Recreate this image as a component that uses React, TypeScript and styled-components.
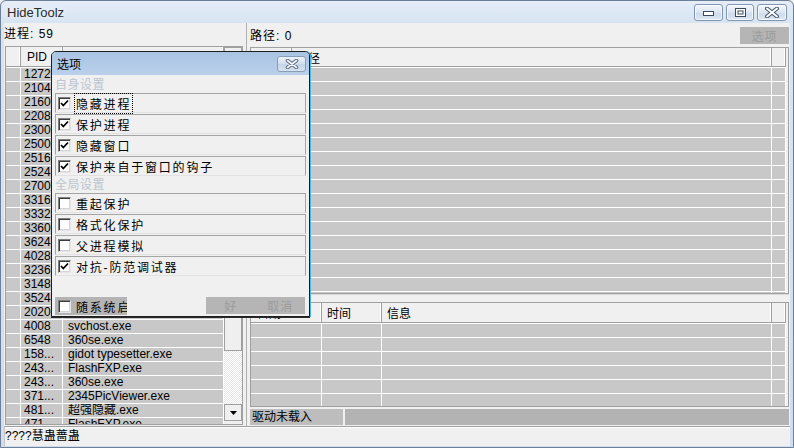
import React from 'react';
import styled, { createGlobalStyle } from 'styled-components';

const FONT = `"Liberation Sans", "Noto Sans CJK SC", sans-serif`;

const GlobalStyle = createGlobalStyle`
  html, body { margin: 0; padding: 0; background: #f0f0f0; }
  body { font-family: ${FONT}; font-size: 12px; color: #000; }
  * { box-sizing: border-box; }
`;

const Root = styled.div`
  position: relative;
  width: 794px;
  height: 448px;
  overflow: hidden;
`;

const Frame = styled.div`
  display: flex;
  flex-direction: column;
  width: 100%;
  height: 100%;
  border: 1px solid #6d7f96;
  border-radius: 6px 6px 0 0;
  background: linear-gradient(#e4edf8, #d6e3f2 24px, #cfdef0);
  padding: 0 3px 1px 3px;
`;

const TitleBar = styled.div`
  height: 22px;
  flex: 0 0 22px;
  display: flex;
  align-items: flex-start;
  justify-content: space-between;
`;

const TitleText = styled.div`
  padding: 4px 0 0 3px;
  font-family: "Liberation Sans", sans-serif;
  font-size: 13px;
  color: #2a2a2a;
  text-shadow: 0 0 6px #fff;
`;

const WinControls = styled.div`
  display: flex;
  gap: 3px;
  padding-top: 3px;
  margin-right: 3px;
`;

const WinButton = styled.div<{ $w: number }>`
  width: ${(p) => p.$w}px;
  height: 17px;
  border: 1px solid #8295b0;
  border-radius: 3px;
  background: linear-gradient(#f4f7fb, #dbe5f1 50%, #cdd9e9 51%, #dde7f3);
  box-shadow: inset 0 0 0 1px rgba(255, 255, 255, 0.7);
  display: flex;
  align-items: center;
  justify-content: center;
`;

const Client = styled.div`
  flex: 1;
  display: flex;
  flex-direction: column;
  background: #f0f0f0;
  min-height: 0;
`;

const Main = styled.div`
  flex: 1;
  display: flex;
  min-height: 0;
`;

const LeftPane = styled.div`
  width: 242px;
  flex: 0 0 242px;
  display: flex;
  flex-direction: column;
  padding: 0 3px 1px 1px;
`;

const Splitter = styled.div`
  width: 3px;
  flex: 0 0 3px;
  border-left: 1px solid #b0b0b0;
`;

const PaneLabel = styled.div`
  height: 23px;
  flex: 0 0 23px;
  line-height: 22px;
  font-size: 12px;
  letter-spacing: 1px;
  margin-left: -1px;
  white-space: nowrap;
`;

const PathLabel = styled.span`
  font-size: 12px;
  letter-spacing: 1px;
  white-space: nowrap;
  margin-bottom: 2px;
`;

const ListBox = styled.div<{ $h?: number }>`
  ${(p) => (p.$h ? `height: ${p.$h}px; flex: 0 0 ${p.$h}px;` : 'flex: 1; min-height: 0;')}
  border: 1px solid #a0a0a0;
  background: #f0f0f0;
  display: flex;
  overflow: hidden;
`;

const TableArea = styled.div<{ $pr?: number }>`
  flex: 1;
  min-width: 0;
  display: flex;
  flex-direction: column;
  overflow: hidden;
  padding-right: ${(p) => p.$pr ?? 0}px;
`;

const HeaderRow = styled.div<{ $h: number }>`
  height: ${(p) => p.$h}px;
  flex: 0 0 ${(p) => p.$h}px;
  display: flex;
  border-bottom: 1px solid #a0a0a0;
  box-shadow: 0 1px 0 #fff;
  margin-bottom: 1px;
`;

const HeaderCell = styled.div<{ $w?: number; $pl?: number }>`
  ${(p) => (p.$w ? `flex: 0 0 ${p.$w}px;` : 'flex: 1 1 0;')}
  min-width: 0;
  border-right: 1px solid #a0a0a0;
  box-shadow: inset -1px 0 0 #fff;
  padding-left: ${(p) => p.$pl ?? 4}px;
  display: flex;
  align-items: center;
  font-size: 12px;
  white-space: nowrap;
  overflow: hidden;
`;

const Row = styled.div`
  display: flex;
  height: 14px;
  flex: 0 0 14px;
`;

const Cell = styled.div<{ $w?: number; $pl?: number }>`
  ${(p) => (p.$w ? `flex: 0 0 ${p.$w}px;` : 'flex: 1 1 0;')}
  min-width: 0;
  background: #c8c8c8;
  border-right: 1px solid #fff;
  border-bottom: 1px solid #fff;
  padding-left: ${(p) => p.$pl ?? 3}px;
  font-size: 12px;
  line-height: 13px;
  white-space: nowrap;
  overflow: hidden;
`;

const ScrollCol = styled.div`
  width: 18px;
  flex: 0 0 18px;
  display: flex;
  flex-direction: column;
  padding-bottom: 3px;
`;

const ScrollBtn = styled.div`
  height: 17px;
  flex: 0 0 17px;
  border: 1px solid #a0a0a0;
  background: #f0f0f0;
  display: flex;
  align-items: center;
  justify-content: center;
`;

const ScrollThumb = styled.div`
  height: 287px;
  flex: 0 0 287px;
  border: 1px solid #a0a0a0;
  background: #efefef;
`;

const ScrollTrack = styled.div`
  flex: 1;
  background: repeating-conic-gradient(#ffffff 0 25%, #e6e6e6 0 50%) 0 0 / 2px 2px;
`;

const RightPane = styled.div`
  flex: 1;
  min-width: 0;
  display: flex;
  flex-direction: column;
  padding: 0 1px 1px 1px;
`;

const TopBar = styled.div`
  height: 24px;
  flex: 0 0 24px;
  display: flex;
  align-items: center;
  justify-content: space-between;
`;

const GreyButton = styled.div<{ $w?: number }>`
  ${(p) => (p.$w ? `width: ${p.$w}px; flex: 0 0 ${p.$w}px;` : 'flex: 1 1 0;')}
  height: 17px;
  background: #b5b5b5;
  color: #9c9c9c;
  font-size: 12px;
  letter-spacing: 1px;
  display: flex;
  align-items: center;
  justify-content: center;
`;

const Gap = styled.div<{ $h: number }>`
  height: ${(p) => p.$h}px;
  flex: 0 0 ${(p) => p.$h}px;
  border-top: ${(p) => (p.$h > 4 ? '1px solid #d8d8d8' : 'none')};
`;

const StatusRow = styled.div`
  height: 16px;
  flex: 0 0 16px;
  display: flex;
  gap: 2px;
`;

const StatusBox = styled.div<{ $w?: number; $bg: string }>`
  ${(p) => (p.$w ? `flex: 0 0 ${p.$w}px;` : 'flex: 1 1 0;')}
  background: ${(p) => p.$bg};
  font-size: 12px;
  line-height: 16px;
  padding-left: 2px;
  white-space: nowrap;
  overflow: hidden;
`;

const BottomStrip = styled.div`
  height: 20px;
  flex: 0 0 20px;
  border-top: 1px solid #a0a0a0;
  border-left: 1px solid #c8c8c8;
  box-shadow: inset 0 1px 0 #fff;
  font-size: 12px;
  line-height: 18px;
  white-space: nowrap;
`;

/* Dialog */

const Dialog = styled.div`
  position: absolute;
  left: 51px;
  top: 51px;
  width: 259px;
  height: 266px;
  border: 1px solid #1e1e1e;
  border-radius: 5px 5px 0 0;
  background: #f0f0f0;
  box-shadow: 1px 0 0 #44b9e8, 0 1px 0 #2a2a2a;
  display: flex;
  flex-direction: column;
  overflow: hidden;
`;

const DialogTitle = styled.div`
  height: 23px;
  flex: 0 0 23px;
  background: linear-gradient(#a9c4e3, #bad0ea);
  display: flex;
  align-items: center;
  justify-content: space-between;
  padding: 0 3px 0 5px;
  font-size: 12px;
`;

const DialogClose = styled.div`
  width: 29px;
  height: 16px;
  border: 1px solid #8a9db7;
  border-radius: 3px;
  background: linear-gradient(#eef3fa, #d2deed 50%, #c4d4e8 51%, #d6e2f0);
  display: flex;
  align-items: center;
  justify-content: center;
`;

const DialogBody = styled.div`
  flex: 1;
  display: flex;
  flex-direction: column;
  padding: 1px 3px 1px 3px;
`;

const GroupLabel = styled.div<{ $h: number }>`
  height: ${(p) => p.$h}px;
  flex: 0 0 ${(p) => p.$h}px;
  color: #bcc5cf;
  font-size: 12px;
  line-height: ${(p) => p.$h + 1}px;
  letter-spacing: 0.5px;
`;

const OptionRow = styled.div`
  height: 20px;
  flex: 0 0 20px;
  margin-bottom: 1px;
  border: 1px solid #a5a5a5;
  border-bottom-color: #e2e2e2;
  display: flex;
  align-items: center;
  gap: 5px;
  padding-left: 2px;
`;

const CheckBox = styled.div`
  width: 13px;
  height: 13px;
  flex: 0 0 13px;
  background: #fff;
  border: 1px solid;
  border-color: #808080 #e6e6e6 #e6e6e6 #808080;
  box-shadow: inset 1px 1px 0 #3c3c3c, inset -1px -1px 0 #d4d4d4;
  display: flex;
  align-items: center;
  justify-content: center;
`;

const OptionText = styled.span<{ $focus?: boolean }>`
  font-size: 12px;
  letter-spacing: 1.8px;
  white-space: nowrap;
  ${(p) => (p.$focus ? 'outline: 1px dotted #000; outline-offset: 1px;' : '')}
`;

const Spacer = styled.div`
  flex: 1;
`;

const DialogFooter = styled.div`
  height: 18px;
  flex: 0 0 18px;
  display: flex;
  justify-content: space-between;
  padding-right: 1px;
`;

const AutoStartBox = styled.div`
  width: 72px;
  flex: 0 0 72px;
  background: #b4b4b4;
  display: flex;
  align-items: center;
  gap: 5px;
  padding-left: 3px;
  overflow: hidden;
  white-space: nowrap;
`;

const FooterButtons = styled.div`
  width: 99px;
  display: flex;
`;

const Check = () => (
  <svg width="9" height="9" viewBox="0 0 9 9">
    <polyline points="1,4 3.3,6.5 8,1.5" fill="none" stroke="#000" strokeWidth="1.8" />
  </svg>
);

const Option = ({ label, checked, focus }: { label: string; checked?: boolean; focus?: boolean }) => (
  <OptionRow>
    <CheckBox>{checked && <Check />}</CheckBox>
    <OptionText $focus={focus}>{label}</OptionText>
  </OptionRow>
);

/* names of the first rows are hidden behind the dialog */
const leftRows: [string, string][] = [
  ['1272', ''],
  ['2104', ''],
  ['2160', ''],
  ['2208', ''],
  ['2300', ''],
  ['2500', ''],
  ['2516', ''],
  ['2524', ''],
  ['2700', ''],
  ['3316', ''],
  ['3332', ''],
  ['3360', ''],
  ['3624', ''],
  ['4028', ''],
  ['3236', ''],
  ['3148', ''],
  ['3524', ''],
  ['2020', ''],
  ['4008', 'svchost.exe'],
  ['6548', '360se.exe'],
  ['158...', 'gidot typesetter.exe'],
  ['243...', 'FlashFXP.exe'],
  ['243...', '360se.exe'],
  ['371...', '2345PicViewer.exe'],
  ['481...', '超强隐藏.exe'],
  ['471...', 'FlashFXP.exe'],
];

export default function App() {
  return (
    <Root>
      <GlobalStyle />
      <Frame>
        <TitleBar>
          <TitleText>HideToolz</TitleText>
          <WinControls>
            <WinButton $w={29}>
              <svg width="11" height="6" viewBox="0 0 11 6">
                <rect x="0.5" y="1.5" width="10" height="4" fill="#fff" stroke="#3b4a5e" />
              </svg>
            </WinButton>
            <WinButton $w={28}>
              <svg width="11" height="9" viewBox="0 0 11 9">
                <rect x="0.5" y="0.5" width="10" height="8" fill="#fff" stroke="#3b4a5e" />
                <rect x="3" y="3" width="5" height="3" fill="none" stroke="#3b4a5e" />
              </svg>
            </WinButton>
            <WinButton $w={30}>
              <svg width="14" height="11" viewBox="0 0 14 11">
                <path d="M2 1.5 L12 9.5 M12 1.5 L2 9.5" stroke="#48576b" strokeWidth="4" strokeLinecap="round" />
                <path d="M2 1.5 L12 9.5 M12 1.5 L2 9.5" stroke="#fff" strokeWidth="2" strokeLinecap="round" />
              </svg>
            </WinButton>
          </WinControls>
        </TitleBar>
        <Client>
          <Main>
            <LeftPane>
              <PaneLabel>进程: 59</PaneLabel>
              <ListBox>
                <TableArea>
                  <HeaderRow $h={20}>
                    <HeaderCell $w={15} />
                    <HeaderCell $w={42} $pl={6}>PID</HeaderCell>
                    <HeaderCell $pl={4} />
                  </HeaderRow>
                  {leftRows.map(([pid, name], i) => (
                    <Row key={i}>
                      <Cell $w={15} />
                      <Cell $w={42} $pl={3}>{pid}</Cell>
                      <Cell $pl={5}>{name}</Cell>
                    </Row>
                  ))}
                </TableArea>
                <ScrollCol>
                  <ScrollBtn>
                    <svg width="7" height="4" viewBox="0 0 7 4">
                      <polygon points="0,4 7,4 3.5,0" fill="#000" />
                    </svg>
                  </ScrollBtn>
                  <ScrollThumb />
                  <ScrollTrack />
                  <ScrollBtn>
                    <svg width="7" height="4" viewBox="0 0 7 4">
                      <polygon points="0,0 7,0 3.5,4" fill="#000" />
                    </svg>
                  </ScrollBtn>
                </ScrollCol>
              </ListBox>
            </LeftPane>
            <Splitter />
            <RightPane>
              <TopBar>
                <PathLabel>路径: 0</PathLabel>
                <GreyButton $w={49}>选项</GreyButton>
              </TopBar>
              <ListBox>
                <TableArea $pr={2}>
                  <HeaderRow $h={19}>
                    <HeaderCell $w={41} />
                    <HeaderCell $pl={4}>路径</HeaderCell>
                    <HeaderCell $w={14} />
                  </HeaderRow>
                  {Array.from({ length: 17 }).map((_, i) => (
                    <Row key={i}>
                      <Cell $w={41} />
                      <Cell />
                      <Cell $w={14} />
                    </Row>
                  ))}
                </TableArea>
              </ListBox>
              <Gap $h={8} />
              <ListBox $h={105}>
                <TableArea $pr={2}>
                  <HeaderRow $h={20}>
                    <HeaderCell $w={71} $pl={6}>日期</HeaderCell>
                    <HeaderCell $w={60} $pl={5}>时间</HeaderCell>
                    <HeaderCell $pl={5}>信息</HeaderCell>
                    <HeaderCell $w={14} />
                  </HeaderRow>
                  {Array.from({ length: 6 }).map((_, i) => (
                    <Row key={i}>
                      <Cell $w={71} />
                      <Cell $w={60} />
                      <Cell />
                      <Cell $w={14} />
                    </Row>
                  ))}
                </TableArea>
              </ListBox>
              <Gap $h={2} />
              <StatusRow>
                <StatusBox $w={93} $bg="#bdbdbd">驱动未载入</StatusBox>
                <StatusBox $bg="#b3b3b3" />
              </StatusRow>
            </RightPane>
          </Main>
          <BottomStrip>????慧蛊蔷蛊</BottomStrip>
        </Client>
      </Frame>

      <Dialog>
        <DialogTitle>
          <span>选项</span>
          <DialogClose>
            <svg width="14" height="10" viewBox="0 0 14 10">
              <path d="M2.5 1.5 L11.5 8.5 M11.5 1.5 L2.5 8.5" stroke="#5b6a7e" strokeWidth="3.6" strokeLinecap="round" />
              <path d="M2.5 1.5 L11.5 8.5 M11.5 1.5 L2.5 8.5" stroke="#f4f7fb" strokeWidth="1.6" strokeLinecap="round" />
            </svg>
          </DialogClose>
        </DialogTitle>
        <DialogBody>
          <GroupLabel $h={17}>自身设置</GroupLabel>
          <Option label="隐藏进程" checked focus />
          <Option label="保护进程" checked />
          <Option label="隐藏窗口" checked />
          <Option label="保护来自于窗口的钩子" checked />
          <GroupLabel $h={16}>全局设置</GroupLabel>
          <Option label="重起保护" />
          <Option label="格式化保护" />
          <Option label="父进程模拟" />
          <Option label="对抗-防范调试器" checked />
          <Spacer />
          <DialogFooter>
            <AutoStartBox>
              <CheckBox />
              <OptionText>随系统启动</OptionText>
            </AutoStartBox>
            <FooterButtons>
              <GreyButton>好</GreyButton>
              <GreyButton>取消</GreyButton>
            </FooterButtons>
          </DialogFooter>
        </DialogBody>
      </Dialog>
    </Root>
  );
}
